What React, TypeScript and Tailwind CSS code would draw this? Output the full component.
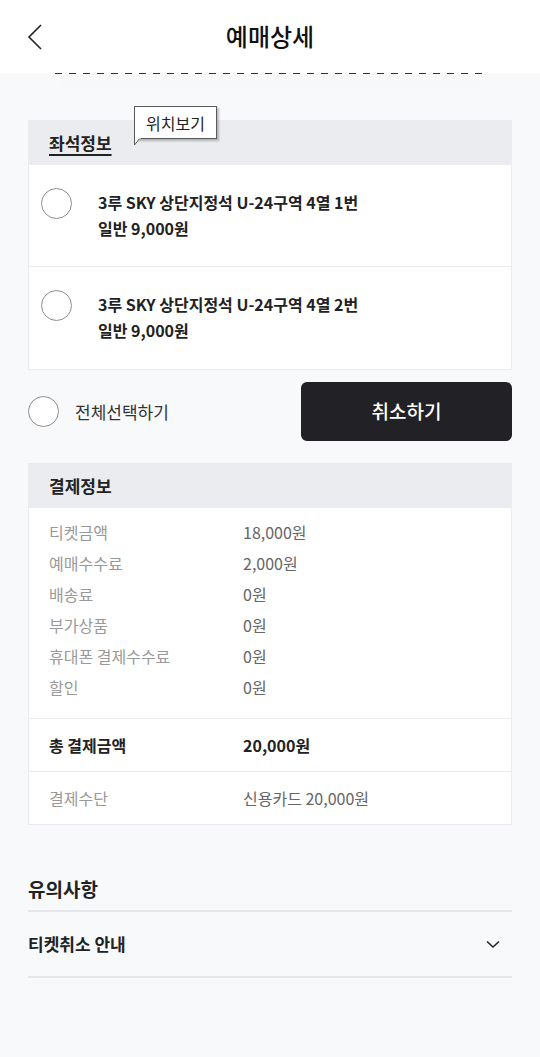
import React from "react";

const font = { fontFamily: '"Noto Sans CJK KR", "Noto Sans", sans-serif' };

function Circle({ className = "" }: { className?: string }) {
  return (
    <span
      className={`block w-[31px] h-[31px] rounded-full border border-[#8e8e8e] bg-white shrink-0 ${className}`}
    />
  );
}

function SeatRow({ label, last }: { label: string; last?: boolean }) {
  return (
    <div
      className={`h-[102px] flex items-start pt-[24px] pl-[12px] bg-white ${
        last ? "" : "border-b border-[#ececee]"
      }`}
    >
      <Circle className="-mt-[1px]" />
      <div className="ml-[26px] text-[16px] leading-[26px] font-bold text-[#222]">
        <div>{label}</div>
        <div>일반 9,000원</div>
      </div>
    </div>
  );
}

const payRows: [string, string][] = [
  ["티켓금액", "18,000원"],
  ["예매수수료", "2,000원"],
  ["배송료", "0원"],
  ["부가상품", "0원"],
  ["휴대폰 결제수수료", "0원"],
  ["할인", "0원"],
];

export default function App() {
  return (
    <div className="w-[540px] min-h-[1057px] bg-[#f8f9fb] text-[#222]" style={font}>
      {/* Header */}
      <div className="relative h-[73px] bg-white flex items-center justify-center">
        <button className="absolute left-[25px] top-[23px] w-[20px] h-[28px] flex items-center justify-center">
          <svg width="18" height="28" viewBox="0 0 18 28" fill="none">
            <path d="M15 2 L3 14 L15 26" stroke="#222" strokeWidth="1.6" />
          </svg>
        </button>
        <h1 className="text-[24px] font-medium text-[#111] -mt-[1px]">예매상세</h1>
      </div>
      {/* dashed ticket edge */}
      <div className="mx-[55px] h-[2px] -mt-[1px] bg-[linear-gradient(to_right,#333_50%,transparent_50%)] bg-[length:14px_2px] shadow-[0_8px_16px_rgba(0,0,0,0.05)]" />

      <div className="px-[28px]">
        {/* Seat info */}
        <div className="relative mt-[46px] border border-[#ececee]">
          <div className="h-[44px] bg-[#ebecef] flex items-center pl-[20px]">
            <span className="text-[17px] font-bold underline underline-offset-[4px] decoration-[1.5px]">
              좌석정보
            </span>
          </div>
          {/* tooltip */}
          <div className="absolute left-[105px] -top-[15px] w-[83px] h-[33px] bg-white border border-[#5a5a5a] shadow-[2px_2px_2px_rgba(0,0,0,0.25)] flex items-center justify-center text-[16px] text-[#222]">
            위치보기
            <svg
              className="absolute -left-[1px] top-[31px]"
              width="8"
              height="8"
              viewBox="0 0 8 8"
            >
              <path d="M0.5 0 L0.5 7 L6 0" fill="white" stroke="#5a5a5a" strokeWidth="1" />
              <path d="M1.2 0 L6.5 0" stroke="white" strokeWidth="1.5" />
            </svg>
          </div>
          <SeatRow label="3루 SKY 상단지정석 U-24구역 4열 1번" />
          <SeatRow label="3루 SKY 상단지정석 U-24구역 4열 2번" last />
        </div>

        {/* controls */}
        <div className="mt-[12px] flex items-center justify-between">
          <label className="flex items-center">
            <Circle />
            <span className="ml-[16px] text-[17px] text-[#333]">전체선택하기</span>
          </label>
          <button className="w-[211px] h-[59px] rounded-[6px] bg-[#222226] text-white text-[19px] font-medium">
            취소하기
          </button>
        </div>

        {/* Payment info */}
        <div className="mt-[22px] border border-[#ececee] bg-white">
          <div className="h-[44px] bg-[#ebecef] flex items-center pl-[20px]">
            <span className="text-[17px] font-bold">결제정보</span>
          </div>
          <div className="pt-[8px] pb-[16px] border-b border-[#ececee]">
            {payRows.map(([k, v]) => (
              <div key={k} className="flex h-[31px] items-center text-[16px]">
                <span className="w-[214px] pl-[20px] text-[#999]">{k}</span>
                <span className="text-[#666]">{v}</span>
              </div>
            ))}
          </div>
          <div className="flex h-[53px] items-center text-[16px] font-bold border-b border-[#ececee]">
            <span className="w-[214px] pl-[20px] text-[#222]">총 결제금액</span>
            <span className="text-[#222]">20,000원</span>
          </div>
          <div className="flex h-[52px] items-center text-[16px]">
            <span className="w-[214px] pl-[20px] text-[#999]">결제수단</span>
            <span className="text-[#666]">신용카드 20,000원</span>
          </div>
        </div>

        {/* Notice */}
        <div className="mt-[48px]">
          <div className="h-[32px] flex items-center text-[19px] font-bold text-[#222]">
            유의사항
          </div>
          <div className="mt-[5px] border-t-2 border-b-2 border-[#e6e7ea] h-[68px] flex items-center justify-between">
            <span className="text-[17px] font-bold text-[#222]">티켓취소 안내</span>
            <svg className="mr-[12px]" width="14" height="9" viewBox="0 0 14 9" fill="none">
              <path d="M1 1.5 L7 7 L13 1.5" stroke="#222" strokeWidth="1.6" />
            </svg>
          </div>
        </div>
      </div>
    </div>
  );
}
